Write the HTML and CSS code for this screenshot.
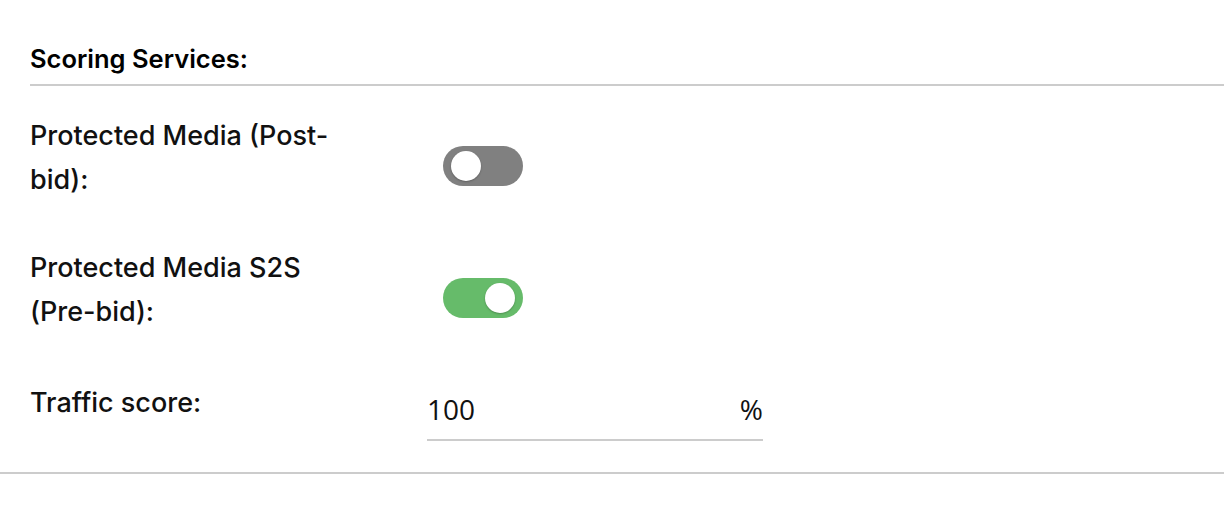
FILE: index.html
```html
<!DOCTYPE html>
<html lang="en">
<head>
<meta charset="utf-8">
<title>Scoring Services</title>
<link rel="stylesheet" href="styles.css">
</head>
<body>
<section class="panel">
  <div class="panel-head">
    <h2 class="panel-title">Scoring Services:</h2>
  </div>
  <div class="row">
    <div class="row-label">Protected Media (Post-bid):</div>
    <div class="row-control">
      <span class="toggle"><span class="knob"></span></span>
    </div>
  </div>
  <div class="row">
    <div class="row-label">Protected Media S2S (Pre-bid):</div>
    <div class="row-control">
      <span class="toggle is-on"><span class="knob"></span></span>
    </div>
  </div>
  <div class="row row-last">
    <div class="row-label">Traffic score:</div>
    <div class="row-control">
      <div class="field">
        <span class="field-value">100</span>
        <span class="field-unit">%</span>
      </div>
    </div>
  </div>
</section>
</body>
</html>
```

FILE: styles.css
```css
html, body {
  margin: 0;
  padding: 0;
  background: #ffffff;
}

body {
  font-family: Inter, "Noto Sans", "Liberation Sans", sans-serif;
  color: #111111;
  overflow: hidden;
}

.panel {
  border-bottom: 2px solid #cccccc;
  padding-top: 43px;
}

.panel-head {
  margin-left: 30px;
  border-bottom: 2px solid #cccccc;
  padding-bottom: 9px;
}

.panel-title {
  margin: 0;
  font-size: 25.5px;
  line-height: 32px;
  font-weight: 600;
  color: #000000;
}

.row {
  display: flex;
  align-items: flex-start;
  padding: 28px 0 16px 30px;
}

.row-label {
  width: 310px;
  flex: none;
  font-size: 27px;
  line-height: 44px;
  font-weight: 500;
  color: #111111;
}

.row-control {
  margin-left: 87px;
}

.toggle {
  display: flex;
  align-items: center;
  box-sizing: border-box;
  width: 80px;
  height: 40px;
  margin: 32px 0 0 16px;
  padding: 0 8px;
  border-radius: 20px;
  background: #808080;
}

.toggle.is-on {
  background: #66bb6a;
  justify-content: flex-end;
}

.knob {
  width: 30px;
  height: 30px;
  border-radius: 50%;
  background: #ffffff;
  box-shadow: 0 1px 2px rgba(0, 0, 0, 0.25);
}

.row-last {
  padding-top: 31px;
  padding-bottom: 31px;
}

.field {
  display: flex;
  justify-content: space-between;
  align-items: baseline;
  width: 336px;
  margin-top: 10px;
  padding-bottom: 12px;
  border-bottom: 2px solid #cccccc;
  font-family: "Open Sans", Roboto, "Liberation Sans", sans-serif;
  font-size: 28px;
  line-height: 36px;
  color: #111111;
}
```
